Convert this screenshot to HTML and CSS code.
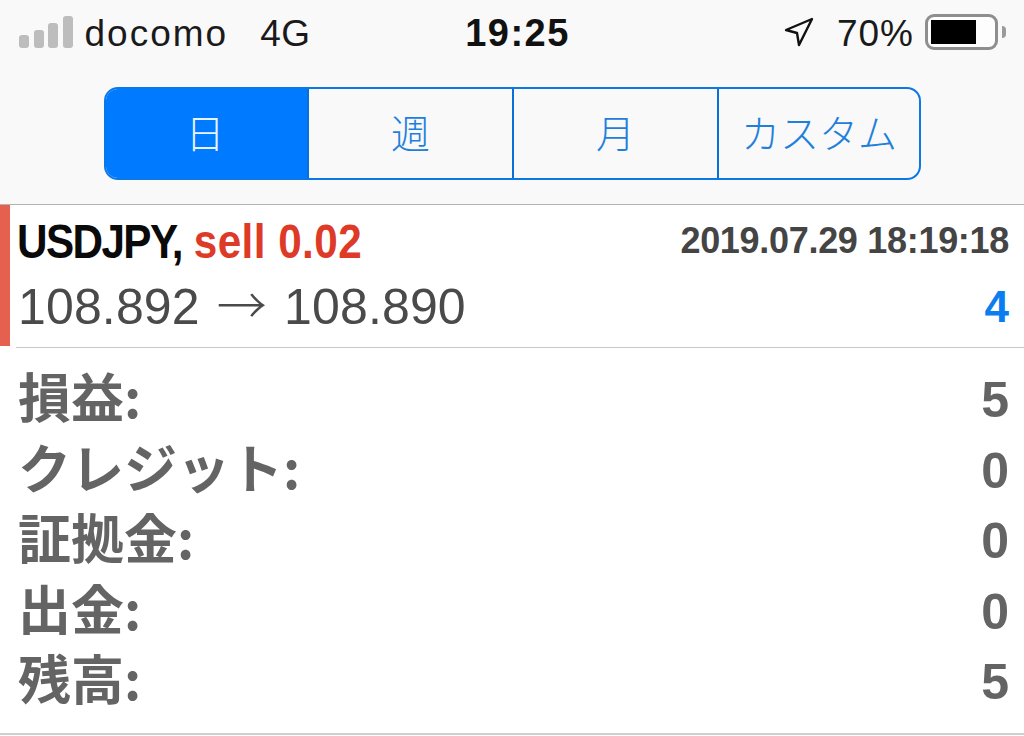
FILE: index.html
```html
<!DOCTYPE html>
<html>
	<head>
		<meta charset="UTF-8">
		<title></title>
		<link rel="stylesheet" href="styles.css">
	</head>
	<body>
		<div class="top">
			<div class="status">
				<div class="status-left">
					<div class="signal"><i></i><i></i><i></i><i></i></div>
					<span class="carrier">docomo</span>
					<span class="net">4G</span>
				</div>
				<div class="time">19:25</div>
				<div class="status-right">
					<svg class="arrow" width="30" height="30" viewBox="0 0 30 30"><path d="M28 2 L2 13 L13 16 L15 28 Z" fill="none" stroke="#111" stroke-width="2.4" stroke-linejoin="round"/></svg>
					<span class="pct">70%</span>
					<div class="battery"><div class="level"></div></div>
					<div class="nub"></div>
				</div>
			</div>
			<div class="tabs">
				<a class="tab active">日</a>
				<a class="tab">週</a>
				<a class="tab">月</a>
				<a class="tab">カスタム</a>
			</div>
		</div>
		<div class="deal">
			<div class="stripe"></div>
			<div class="deal-inner">
				<div class="deal-row">
					<div class="deal-name"><span class="pair">USDJPY,</span> <span class="sell">sell 0.02</span></div>
					<div class="deal-date">2019.07.29 18:19:18</div>
				</div>
				<div class="deal-row">
					<div class="deal-price">108.892 <span class="to">→</span> 108.890</div>
					<div class="deal-profit">4</div>
				</div>
			</div>
		</div>
		<div class="summary">
			<div class="line"><span>損益:</span><span class="num">5</span></div>
			<div class="line"><span>クレジット:</span><span class="num">0</span></div>
			<div class="line"><span>証拠金:</span><span class="num">0</span></div>
			<div class="line"><span>出金:</span><span class="num">0</span></div>
			<div class="line"><span>残高:</span><span class="num">5</span></div>
		</div>
	</body>
</html>
```

FILE: styles.css
```css
*{
    margin: 0;
    padding: 0;
    box-sizing: border-box;
}
html,body{
    height: 736px;
    overflow: hidden;
}
body{
    background: #fff;
    font-family: "Liberation Sans", "Noto Sans CJK JP", sans-serif;
}
.top{
    height: 205px;
    background: #f9f9fa;
    border-bottom: 1px solid #b4b4b6;
    padding-top: 9px;
}
.status{
    display: grid;
    grid-template-columns: 1fr auto 1fr;
    align-items: center;
    height: 40px;
    padding: 0 18px 0 19px;
}
.status-left{
    display: flex;
    align-items: center;
}
.signal{
    display: flex;
    align-items: flex-end;
    gap: 4.5px;
    height: 32px;
    margin-right: 12px;
}
.signal i{
    display: block;
    width: 10px;
    background: #bdbdbd;
    border-radius: 3px;
}
.signal i:nth-child(1){height: 13px;}
.signal i:nth-child(2){height: 18px;}
.signal i:nth-child(3){height: 25px;}
.signal i:nth-child(4){height: 32px;}
.carrier,.net,.pct{
    font-size: 37px;
    color: #1a1a1a;
    padding-top: 3px;
}
.carrier{
    letter-spacing: 2px;
}
.net{
    margin-left: 32px;
    letter-spacing: 0.5px;
}
.pct{
    letter-spacing: 1px;
    margin-right: 11px;
}
.time{
    font-size: 38px;
    font-weight: bold;
    color: #111;
    letter-spacing: 1.5px;
    margin-left: 10px;
    padding-top: 3px;
}
.status-right{
    display: flex;
    align-items: center;
    justify-content: flex-end;
}
.arrow{
    margin-right: 23px;
}
.battery{
    width: 73px;
    height: 36px;
    border: 3px solid #8e8e8e;
    border-radius: 9px;
    padding: 3px;
    background: #fdfdfd;
}
.level{
    width: 45px;
    height: 24px;
    background: #000;
}
.nub{
    width: 4px;
    height: 12px;
    margin-left: 4px;
    background: #9a9a9a;
    border-radius: 0 6px 6px 0;
}
.tabs{
    display: flex;
    width: 817px;
    height: 93px;
    margin: 38px 0 0 104px;
    border: 2px solid #0a78e6;
    border-radius: 14px;
    overflow: hidden;
}
.tab{
    flex: 0 0 205px;
    display: flex;
    align-items: center;
    justify-content: center;
    font-family: "Noto Sans CJK JP", sans-serif;
    font-weight: 300;
    font-size: 39px;
    color: #1f80dc;
    border-left: 2px solid #0a6fd6;
    padding-bottom: 6px;
}
.tab:first-child{
    flex-basis: 201px;
    border-left: 0;
    padding-right: 3px;
}
.tab:last-child{
    flex-basis: 202px;
}
.tab.active{
    background: #007aff;
    color: #e8f3ff;
}
.deal{
    display: flex;
    align-items: flex-start;
    height: 143px;
}
.stripe{
    flex: 0 0 10px;
    height: 141px;
    background: #e5604f;
}
.deal-inner{
    flex: 1;
    height: 143px;
    margin-left: 6px;
    padding: 3px 15px 0 1px;
    border-bottom: 1px solid #c8c8c8;
}
.deal-row{
    display: flex;
    justify-content: space-between;
    align-items: center;
    height: 66px;
}
.deal-name{
    font-size: 48px;
    font-weight: bold;
    color: #0a0a0a;
    transform: scaleX(0.88);
    transform-origin: left center;
    white-space: nowrap;
}
.pair{
    letter-spacing: -1.8px;
}
.sell{
    color: #de3a28;
    letter-spacing: 0.5px;
}
.deal-date{
    font-size: 36px;
    font-weight: bold;
    color: #444;
    letter-spacing: -0.3px;
}
.deal-price{
    font-size: 50px;
    color: #4a4a4a;
    margin-left: 1px;
    white-space: nowrap;
    word-spacing: 3px;
    letter-spacing: 0.15px;
    line-height: 1;
}
.to{
    font-family: "Noto Sans CJK JP", sans-serif;
    font-weight: 300;
    line-height: 0;
}
.deal-profit{
    font-size: 44px;
    font-weight: bold;
    color: #0a7df0;
}
.summary{
    height: 387px;
    padding: 12px 15px 0 18px;
    border-bottom: 2px solid #cfcfcf;
}
.line{
    display: flex;
    justify-content: space-between;
    align-items: center;
    height: 70.5px;
    font-size: 53px;
    font-weight: bold;
    color: #646464;
}
.line span{
    font-family: "Noto Sans CJK JP", sans-serif;
}
.line span.num{
    font-family: "Liberation Sans", sans-serif;
    font-size: 50px;
    padding-top: 10px;
}
```
